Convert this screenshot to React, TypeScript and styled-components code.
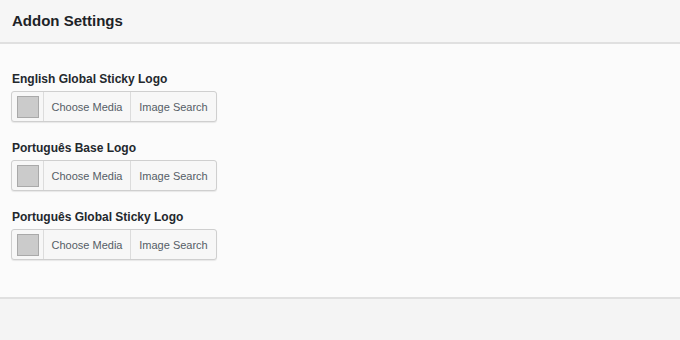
import React from "react";
import styled, { createGlobalStyle } from "styled-components";

const Global = createGlobalStyle`
  html, body { margin: 0; padding: 0; background: #f4f4f4; }
  body { font-family: "Liberation Sans", Arial, sans-serif; color: #23282d; }
`;

const Page = styled.div`
  width: 680px;
  height: 340px;
  display: flex;
  flex-direction: column;
  background: #f4f4f4;
`;

const Header = styled.div`
  height: 44px;
  box-sizing: border-box;
  padding: 0 12px;
  display: flex;
  align-items: center;
  background: #f6f6f6;
  border-bottom: 2px solid #e0e0e0;
`;

const Title = styled.h1`
  margin: 0;
  font-size: 15px;
  font-weight: 600;
  color: #1d2327;
  position: relative;
  top: -1px;
`;

const Body = styled.div`
  height: 255px;
  box-sizing: border-box;
  padding: 27px 11px 0;
  background: #fbfbfb;
  border-bottom: 2px solid #e0e0e0;
  display: flex;
  flex-direction: column;
  gap: 18px;
`;

const Field = styled.div`
  display: flex;
  flex-direction: column;
  gap: 4px;
`;

const Label = styled.label`
  font-size: 12px;
  font-weight: 700;
  color: #23282d;
  padding-left: 1px;
  line-height: 16px;
`;

const Group = styled.div`
  display: flex;
  align-self: flex-start;
  height: 31px;
  box-sizing: border-box;
  border: 1px solid #cfcfcf;
  border-radius: 3px;
  background: #f7f7f7;
  box-shadow: 0 1px 1px rgba(0, 0, 0, 0.08);
`;

const SwatchCell = styled.div`
  width: 31px;
  display: flex;
  align-items: center;
  justify-content: center;
  border-right: 1px solid #dcdcdc;
`;

const Swatch = styled.div`
  width: 20px;
  height: 20px;
  background: #cbcbcb;
  border: 1px solid #a9a9a9;
`;

const Btn = styled.button<{ $w: number; $last?: boolean }>`
  width: ${(p) => p.$w}px;
  border: none;
  border-right: ${(p) => (p.$last ? "none" : "1px solid #dcdcdc")};
  background: transparent;
  font-family: "Liberation Sans", Arial, sans-serif;
  font-size: 11px;
  color: #555d66;
  padding: 0;
  cursor: pointer;
`;

const fields = ["English Global Sticky Logo", "Português Base Logo", "Português Global Sticky Logo"];

export default function App() {
  return (
    <Page>
      <Global />
      <Header>
        <Title>Addon Settings</Title>
      </Header>
      <Body>
        {fields.map((f) => (
          <Field key={f}>
            <Label>{f}</Label>
            <Group>
              <SwatchCell>
                <Swatch />
              </SwatchCell>
              <Btn $w={87}>Choose Media</Btn>
              <Btn $w={85} $last>
                Image Search
              </Btn>
            </Group>
          </Field>
        ))}
      </Body>
    </Page>
  );
}
